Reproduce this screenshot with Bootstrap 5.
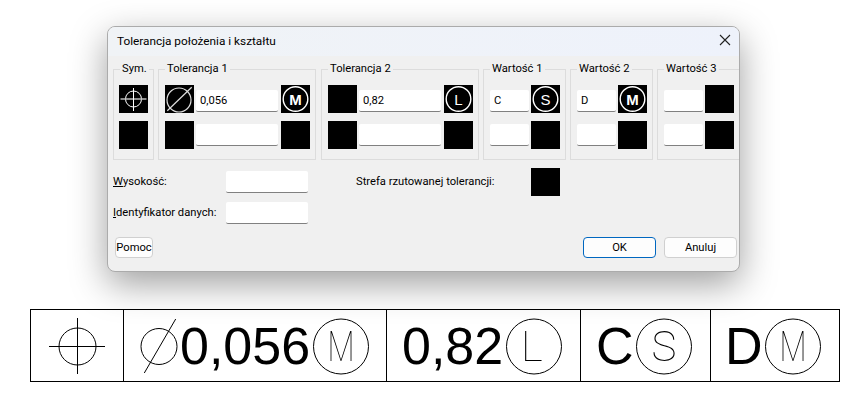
<!DOCTYPE html>
<html lang="pl">
<head>
  <meta charset="UTF-8">
  <title>Tolerancja położenia i kształtu</title>
  <meta name="viewport" content="width=device-width, initial-scale=1">
  <link href="https://cdn.jsdelivr.net/npm/bootstrap@5.3.3/dist/css/bootstrap.min.css" rel="stylesheet">
  <style>
    body {
      background: #fff;
      color: #000;
      font-family: Roboto, "Liberation Sans", sans-serif;
      font-size: 11.2px;
      overflow: hidden;
      padding-top: 26px;
    }
    .dlg {
      width: 633px;
      height: 246px;
      margin-left: 107px;
      background: #f0f0f0;
      border: 1px solid #ababab;
      border-radius: 8px;
      box-shadow: 0 12px 36px rgba(0,0,0,.38);
      overflow: hidden;
    }
    .dlg-title {
      height: 29px;
      padding: 0 8px 0 9px;
      font-size: 11.8px;
      background: linear-gradient(90deg, #f0f3f6, #eef2fb);
    }
    .dlg-close { margin-bottom: 3px; }
    .dlg-body { padding: 5px 0 0 5px; }
    .tol-set {
      flex: none;
      width: 158px;
      border: 1px solid #dcdcdc;
      padding: 8px 5px 10px 6px;
    }
    .tol-set.narrow { width: 41px; padding-left: 5px; }
    .tol-set.value { width: 83px; }
    .tol-set.shift { margin-left: 1px; }
    .tol-set legend {
      float: none;
      width: auto;
      margin: 0;
      padding: 0 2px;
      font-size: 11.2px;
      line-height: 16px;
    }
    .tol-set.narrow legend { margin-left: 1px; }
    .sym-box {
      display: block;
      flex: none;
      width: 29px;
      height: 28px;
      background: #000;
    }
    .sym-box svg { display: block; }
    .sym-row + .sym-row { margin-top: 8px; }
    .sym-row .tol-in { margin-top: 5px; }
    .sym-row + .sym-row .tol-in { margin-top: 3px; }
    .tol-in {
      flex: none;
      width: 82px;
      height: 22px;
      padding: 0 4px;
      background: #fff;
      border: 0;
      border-bottom: 1px solid #808080;
      border-radius: 2px;
      font-size: 11.2px;
      color: #000;
    }
    .tol-in:focus { background: #fff; box-shadow: none; border-color: #808080; }
    .tol-in.short { width: 39px; }
    .wide-gap { margin-right: 3px; }
    .sym-mark { fill: #fff; font-family: "Liberation Sans", sans-serif; font-size: 15px; }
    .lower-row { margin-top: 8px; }
    .field-col { width: 195px; padding-top: 3px; }
    .field-line + .field-line { margin-top: 9px; }
    .field-line label { white-space: nowrap; }
    .strefa { margin-left: 48px; }
    .strefa-label { width: 175px; }
    .foot-row { margin-top: 13px; padding: 0 2px; }
    .dlg-btn {
      height: 21px;
      width: 73px;
      padding: 0;
      background: #fdfdfd;
      border: 1px solid #d0d0d0;
      border-radius: 4px;
      font-size: 11.2px;
      line-height: 18px;
      color: #000;
    }
    .dlg-btn.help { width: 38px; }
    .dlg-btn.main { border: 1.5px solid #0067c0; margin-right: 8px; }
    .frame-strip {
      width: 810px;
      height: 73px;
      margin: 37px 0 0 30px;
      border: 1px solid #000;
      font-family: "Liberation Sans", Arial, sans-serif;
      font-size: 52px;
      line-height: 1;
    }
    .frame-cell { height: 100%; border-left: 1px solid #000; flex: none; column-gap: 2px; }
    .frame-cell svg { display: block; flex: none; will-change: transform; }
    .fc-sym { width: 92px; border-left: 0; }
    .fc-tol1 { width: 263px; padding-left: 16px; }
    .fc-tol2 { width: 194px; padding-left: 15px; }
    .fc-val1 { width: 130px; padding-left: 15px; column-gap: 1px; }
    .fc-val2 { width: 129px; padding-left: 14px; column-gap: 1px; }
    .thin-mark { font-family: Roboto, sans-serif; font-weight: 100; font-size: 42px; fill: #000; }
  </style>
</head>
<body>
  <div class="dlg">
    <div class="dlg-title d-flex align-items-center justify-content-between">
      <span>Tolerancja położenia i kształtu</span>
      <svg width="12" height="12" viewBox="0 0 12 12" class="dlg-close"><path d="M1 1l10 10M11 1L1 11" stroke="#222" stroke-width="1.1" fill="none"/></svg>
    </div>

    <div class="dlg-body">
      <!-- Symbol and tolerance groups -->
      <div class="d-flex gap-1">
        <fieldset class="tol-set narrow">
          <legend>Sym.</legend>
          <div class="sym-row d-flex">
            <span class="sym-box">
              <svg width="29" height="28"><circle cx="14.5" cy="14" r="8" fill="none" stroke="#fff"/><path d="M1.5 14h26" stroke="#bbb" stroke-width="1.5"/><path d="M14.5 3v23" stroke="#fff"/></svg>
            </span>
          </div>
          <div class="sym-row d-flex"><span class="sym-box"></span></div>
        </fieldset>

        <fieldset class="tol-set">
          <legend>Tolerancja 1</legend>
          <div class="sym-row d-flex">
            <span class="sym-box me-auto">
              <svg width="29" height="28"><circle cx="14" cy="15" r="12" fill="none" stroke="#ddd" stroke-width="1.2"/><path d="M2.3 25.7L26.7 2.3" stroke="#ddd" stroke-width="1.2"/></svg>
            </span>
            <input class="tol-in form-control wide-gap" value="0,056">
            <span class="sym-box">
              <svg width="29" height="28"><circle cx="14.5" cy="14" r="12.3" fill="none" stroke="#fff" stroke-width="1.4"/><text x="14.5" y="19.5" text-anchor="middle" class="sym-mark fw-bold">M</text></svg>
            </span>
          </div>
          <div class="sym-row d-flex">
            <span class="sym-box me-auto"></span>
            <input class="tol-in form-control wide-gap">
            <span class="sym-box"></span>
          </div>
        </fieldset>

        <fieldset class="tol-set shift">
          <legend>Tolerancja 2</legend>
          <div class="sym-row d-flex">
            <span class="sym-box me-auto"></span>
            <input class="tol-in form-control wide-gap" value="0,82">
            <span class="sym-box">
              <svg width="29" height="28"><circle cx="14.5" cy="14" r="12.3" fill="none" stroke="#fff" stroke-width="1.4"/><text x="14.5" y="19.5" text-anchor="middle" class="sym-mark">L</text></svg>
            </span>
          </div>
          <div class="sym-row d-flex">
            <span class="sym-box me-auto"></span>
            <input class="tol-in form-control wide-gap">
            <span class="sym-box"></span>
          </div>
        </fieldset>

        <fieldset class="tol-set value">
          <legend>Wartość 1</legend>
          <div class="sym-row d-flex justify-content-between">
            <input class="tol-in short form-control" value="C">
            <span class="sym-box">
              <svg width="29" height="28"><circle cx="14.5" cy="14" r="12.3" fill="none" stroke="#fff" stroke-width="1.4"/><text x="14.5" y="19.5" text-anchor="middle" class="sym-mark">S</text></svg>
            </span>
          </div>
          <div class="sym-row d-flex justify-content-between">
            <input class="tol-in short form-control">
            <span class="sym-box"></span>
          </div>
        </fieldset>

        <fieldset class="tol-set value">
          <legend>Wartość 2</legend>
          <div class="sym-row d-flex justify-content-between">
            <input class="tol-in short form-control" value="D">
            <span class="sym-box">
              <svg width="29" height="28"><circle cx="14.5" cy="14" r="12.3" fill="none" stroke="#fff" stroke-width="1.4"/><text x="14.5" y="19.5" text-anchor="middle" class="sym-mark fw-bold">M</text></svg>
            </span>
          </div>
          <div class="sym-row d-flex justify-content-between">
            <input class="tol-in short form-control">
            <span class="sym-box"></span>
          </div>
        </fieldset>

        <fieldset class="tol-set value">
          <legend>Wartość 3</legend>
          <div class="sym-row d-flex justify-content-between">
            <input class="tol-in short form-control">
            <span class="sym-box"></span>
          </div>
          <div class="sym-row d-flex justify-content-between">
            <input class="tol-in short form-control">
            <span class="sym-box"></span>
          </div>
        </fieldset>
      </div>

      <!-- Height, datum identifier, projected zone -->
      <div class="lower-row d-flex align-items-start">
        <div class="field-col">
          <div class="field-line d-flex align-items-center justify-content-between">
            <label><u>W</u>ysokość:</label>
            <input class="tol-in form-control">
          </div>
          <div class="field-line d-flex align-items-center justify-content-between">
            <label><u>I</u>dentyfikator danych:</label>
            <input class="tol-in form-control">
          </div>
        </div>
        <div class="strefa d-flex align-items-center">
          <span class="strefa-label">Strefa rzutowanej tolerancji:</span>
          <span class="sym-box"></span>
        </div>
      </div>

      <div class="foot-row d-flex">
        <button type="button" class="btn dlg-btn help me-auto">Pomoc</button>
        <button type="button" class="btn dlg-btn main">OK</button>
        <button type="button" class="btn dlg-btn">Anuluj</button>
      </div>
    </div>
  </div>

  <!-- Feature control frame -->
  <div class="frame-strip d-flex">
    <div class="frame-cell fc-sym d-flex align-items-center justify-content-center">
      <svg width="58" height="59"><circle cx="29.5" cy="30.5" r="18.5" fill="none" stroke="#000"/><path d="M1 30.5h56M29.5 2v56" stroke="#000"/></svg>
    </div>
    <div class="frame-cell fc-tol1 d-flex align-items-center">
      <svg width="38" height="59"><circle cx="19" cy="30.5" r="18" fill="none" stroke="#000"/><path d="M4.3 57L35.7 3" stroke="#000"/></svg>
      <span>0,056</span>
      <svg width="58" height="59"><circle cx="29" cy="30.5" r="27.5" fill="none" stroke="#000"/><text x="29" y="45" text-anchor="middle" class="thin-mark" textLength="27" lengthAdjust="spacingAndGlyphs">M</text></svg>
    </div>
    <div class="frame-cell fc-tol2 d-flex align-items-center">
      <span>0,82</span>
      <svg width="58" height="59"><circle cx="29" cy="30.5" r="27.5" fill="none" stroke="#000"/><text x="16" y="45" class="thin-mark">L</text></svg>
    </div>
    <div class="frame-cell fc-val1 d-flex align-items-center">
      <span>C</span>
      <svg width="58" height="59"><circle cx="29" cy="30.5" r="27.5" fill="none" stroke="#000"/><text x="29" y="45" text-anchor="middle" class="thin-mark">S</text></svg>
    </div>
    <div class="frame-cell fc-val2 d-flex align-items-center">
      <span>D</span>
      <svg width="58" height="59"><circle cx="29" cy="30.5" r="27.5" fill="none" stroke="#000"/><text x="29" y="45" text-anchor="middle" class="thin-mark" textLength="27" lengthAdjust="spacingAndGlyphs">M</text></svg>
    </div>
  </div>

  <script src="https://cdn.jsdelivr.net/npm/bootstrap@5.3.3/dist/js/bootstrap.bundle.min.js"></script>
</body>
</html>
